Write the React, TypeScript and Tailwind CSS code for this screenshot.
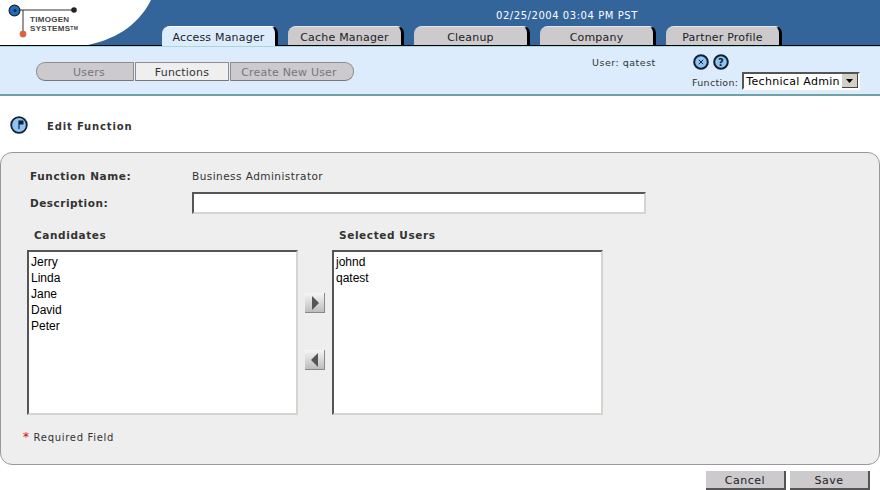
import React from "react";

const font = "font-['DejaVu_Sans',sans-serif]";

function Tab({ label, active }: { label: string; active?: boolean }) {
  return (
    <div
      className={`relative w-[116px] rounded-tl-[8px] rounded-tr-[7px] border-r-[3px] border-black text-center text-[11px] leading-[21px] tracking-[0.2px] text-[#222] ${
        active ? "h-[20px] z-10 border-b-0 bg-[#dcecfd] border-t border-t-white" : "h-[19px] bg-[#cccacc] border-t border-t-[#e6e6e6]"
      }`}
    >
      {label}
    </div>
  );
}

function Sub({ label, cls }: { label: string; cls: string }) {
  return (
    <div className={`h-[19px] border border-[#8f8f8f] border-b-[#777] text-center text-[11px] leading-[20px] tracking-[0.2px] ${cls}`}>
      {label}
    </div>
  );
}

function RoundIcon({ children }: { children: React.ReactNode }) {
  return (
    <svg width="16" height="16" viewBox="0 0 16 16">
      <circle cx="8" cy="8" r="6.8" fill="#8fc3f5" stroke="#10202e" strokeWidth="2" />
      {children}
    </svg>
  );
}

function ListBox({ items }: { items: string[] }) {
  return (
    <div className="w-[271px] h-[165px] bg-white border-2 border-t-[#555] border-l-[#555] border-r-[#d6d4ce] border-b-[#d6d4ce] pt-[2px] px-[2px] font-['Liberation_Sans',sans-serif] text-[12px] leading-[16px] text-black">
      {items.map((i) => (
        <div key={i}>{i}</div>
      ))}
    </div>
  );
}

function ArrowButton({ dir }: { dir: "l" | "r" }) {
  return (
    <div className="w-[20px] h-[20px] flex items-center justify-center bg-gradient-to-b from-[#f6f6f6] to-[#bdbdbd] border-r border-b border-[#888]">
      <svg width="8" height="14" viewBox="0 0 8 14">
        <polygon points={dir === "r" ? "1,0 8,7 1,14" : "7,0 0,7 7,14"} fill="#555" />
      </svg>
    </div>
  );
}

function FootButton({ label }: { label: string }) {
  return (
    <div className="w-[80px] h-[19px] bg-[#cccacc] border-r-2 border-b-2 border-[#555] text-center text-[11px] leading-[20px] tracking-[0.5px] text-[#222]">
      {label}
    </div>
  );
}

export default function App() {
  return (
    <div className={`relative w-[880px] h-[490px] overflow-hidden bg-white ${font} text-[#333]`}>
      {/* top bar */}
      <div className="relative h-[46px] bg-[#33659b] border-b border-black">
        <div className="absolute left-0 top-0 w-[156px] h-[45px]">
          <svg width="156" height="45" viewBox="0 0 156 45">
            <path d="M0 0H151C140 22 120 38 88 45H0Z" fill="#fff" />
            <path d="M14 10H74M23 10V34" stroke="#333" strokeWidth="1" fill="none" />
            <circle cx="14.5" cy="10.5" r="5.4" fill="#1a6cc4" stroke="#222" strokeWidth="1.2" />
            <circle cx="15" cy="10.5" r="1.5" fill="#123" />
            <circle cx="74" cy="10" r="2.8" fill="#222" />
            <circle cx="23" cy="34" r="3.2" fill="#e8602c" stroke="#888" strokeWidth="0.5" />
          </svg>
          <div className="absolute left-[30px] top-[15px] text-[8px] leading-[9px] font-bold text-[#444] font-['Liberation_Sans',sans-serif] tracking-[0.3px]">
            TIMOGEN
            <br />
            SYSTEMS<span className="text-[5px] align-top">TM</span>
          </div>
        </div>
        <div className="absolute left-[496px] top-[9px] text-[10px] leading-[13px] tracking-[0.55px] text-white">
          02/25/2004 03:04 PM PST
        </div>
        <div className="absolute left-[162px] top-[26px] flex items-start gap-[10px]">
          <Tab label="Access Manager" active />
          <Tab label="Cache Manager" />
          <Tab label="Cleanup" />
          <Tab label="Company" />
          <Tab label="Partner Profile" />
        </div>
      </div>

      {/* sub bar */}
      <div className="h-[50px] bg-[#dcecfd] border-t border-t-[#a6d8d8] border-b-2 border-b-[#6fa3a3] flex">
        <div className="ml-[36px] mt-[15px] flex gap-[1px] items-start">
          <Sub label="Users" cls="w-[98px] rounded-l-[9px] bg-[#cccacc] text-[#777] pl-[8px]" />
          <Sub label="Functions" cls="w-[94px] bg-[#efefef] text-[#333]" />
          <Sub label="Create New User" cls="w-[124px] rounded-r-[9px] bg-[#cccacc] text-[#777] pr-[6px]" />
        </div>
        <div className="ml-[238px] w-[280px] relative">
          <div className="flex items-start">
            <div className="mt-[10px] w-[101px] text-[9.5px] leading-[12px] tracking-[0.5px] text-[#333]">User: qatest</div>
            <div className="mt-[7px] flex gap-[4px]">
              <RoundIcon>
                <path d="M5.8 5.8L10.2 10.2M10.2 5.8L5.8 10.2" stroke="#123" strokeWidth="1" />
              </RoundIcon>
              <RoundIcon>
                <text x="8" y="11.5" textAnchor="middle" fontSize="10" fontWeight="700" fill="#123" fontFamily="DejaVu Sans">?</text>
              </RoundIcon>
            </div>
          </div>
          <div className="flex items-center mt-[2px] ml-[100px]">
            <span className="text-[9.5px] tracking-[0.3px] mt-[4px] mr-[4px] text-[#333]">Function:</span>
            <div className="w-[118px] h-[18px] flex bg-white border-2 border-t-[#555] border-l-[#555] border-r-[#fff] border-b-[#fff] text-[11px] leading-[16px] text-black tracking-[0.3px]">
              <span className="flex-1 pl-[2px] overflow-hidden whitespace-nowrap">Technical Admin</span>
              <span className="w-[16px] h-[14px] bg-[#d4d0c8] border-r border-b border-[#444] flex items-center justify-center">
                <svg width="7" height="4" viewBox="0 0 7 4"><polygon points="0,0 7,0 3.5,4" fill="#000" /></svg>
              </span>
            </div>
          </div>
        </div>
      </div>

      {/* title */}
      <div className="h-[56px] flex items-center pl-[10px] pt-[2px]">
        <svg width="18" height="18" viewBox="0 0 18 18">
          <circle cx="9" cy="9" r="7.8" fill="#8fc3f5" stroke="#10202e" strokeWidth="1.8" />
          <path d="M9 4.5V13" stroke="#123" strokeWidth="1.2" />
          <path d="M9 4.5H13.5V8.5H9Z" fill="#123" />
        </svg>
        <span className="ml-[19px] mt-[2px] text-[10px] font-bold tracking-[0.85px] text-[#333]">Edit Function</span>
      </div>

      {/* panel */}
      <div className="h-[313px] bg-[#eeeeee] border border-[#999] rounded-[12px] pl-[26px] pr-[8px]">
        <div className="flex items-center h-[21px] mt-[13px]">
          <span className="ml-[3px] w-[162px] text-[10.5px] font-bold tracking-[0.6px]">Function Name:</span>
          <span className="text-[10.5px] tracking-[0.45px]">Business Administrator</span>
        </div>
        <div className="flex items-center h-[22px] mt-[5px]">
          <span className="ml-[3px] w-[162px] mt-[2px] text-[10.5px] font-bold tracking-[0.5px]">Description:</span>
          <div className="w-[454px] h-[22px] bg-white border-2 border-t-[#555] border-l-[#555] border-r-[#d6d4ce] border-b-[#d6d4ce]" />
        </div>
        <div className="flex h-[15px] mt-[13px] pt-[1px] text-[10.5px] font-bold tracking-[0.6px]">
          <span className="ml-[7px] w-[305px]">Candidates</span>
          <span>Selected Users</span>
        </div>
        <div className="flex mt-[8px]">
          <ListBox items={["Jerry", "Linda", "Jane", "David", "Peter"]} />
          <div className="w-[34px] flex flex-col items-center pt-[43px] gap-[37px]">
            <ArrowButton dir="r" />
            <ArrowButton dir="l" />
          </div>
          <ListBox items={["johnd", "qatest"]} />
        </div>
        <div className="mt-[16px] -ml-[4px] text-[10px] leading-[13px] tracking-[0.7px]">
          <span className="text-[#d00] text-[12px]">*</span> Required Field
        </div>
      </div>

      {/* footer */}
      <div className="flex justify-end gap-[4px] pr-[10px] mt-[6px]">
        <FootButton label="Cancel" />
        <FootButton label="Save" />
      </div>
    </div>
  );
}
